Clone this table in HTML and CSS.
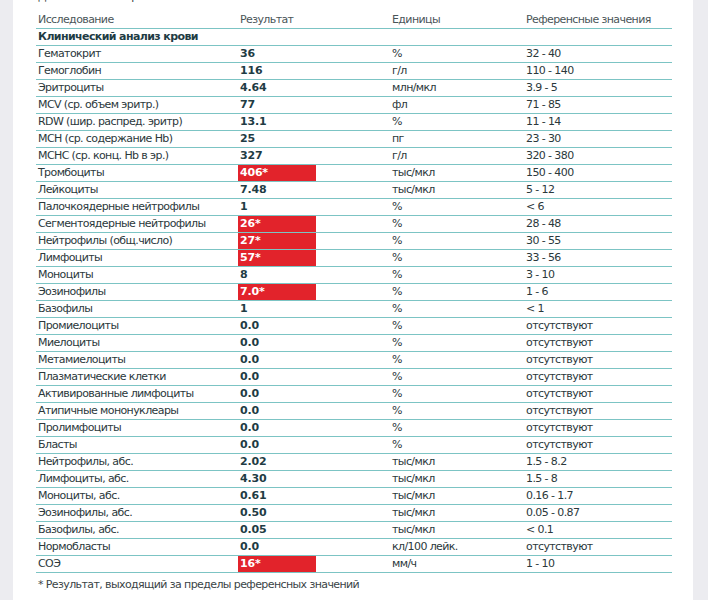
FILE: index.html
```html
<!DOCTYPE html>
<html lang="ru">
<head>
<meta charset="utf-8">
<link rel="stylesheet" href="styles.css">
</head>
<body>
<div class="frame">
  <div class="side side-left"></div>
  <main class="sheet">
    <div class="cut">Дата взятия материала: 12.03</div>
    <table class="results">
      <colgroup>
        <col class="c1"><col class="c2"><col class="c3"><col class="c4">
      </colgroup>
      <thead>
        <tr><th>Исследование</th><th>Результат</th><th>Единицы</th><th>Референсные значения</th></tr>
      </thead>
      <tbody>
        <tr class="section"><td colspan="4">Клинический анализ крови</td></tr>
        <tr><td>Гематокрит</td><td><span class="val">36</span></td><td>%</td><td>32 - 40</td></tr>
        <tr><td>Гемоглобин</td><td><span class="val">116</span></td><td>г/л</td><td>110 - 140</td></tr>
        <tr><td>Эритроциты</td><td><span class="val">4.64</span></td><td>млн/мкл</td><td>3.9 - 5</td></tr>
        <tr><td>MCV (ср. объем эритр.)</td><td><span class="val">77</span></td><td>фл</td><td>71 - 85</td></tr>
        <tr><td>RDW (шир. распред. эритр)</td><td><span class="val">13.1</span></td><td>%</td><td>11 - 14</td></tr>
        <tr><td>MCH (ср. содержание Hb)</td><td><span class="val">25</span></td><td>пг</td><td>23 - 30</td></tr>
        <tr><td>MCHC (ср. конц. Hb в эр.)</td><td><span class="val">327</span></td><td>г/л</td><td>320 - 380</td></tr>
        <tr><td>Тромбоциты</td><td><span class="val bad">406*</span></td><td>тыс/мкл</td><td>150 - 400</td></tr>
        <tr><td>Лейкоциты</td><td><span class="val">7.48</span></td><td>тыс/мкл</td><td>5 - 12</td></tr>
        <tr><td>Палочкоядерные нейтрофилы</td><td><span class="val">1</span></td><td>%</td><td>&lt; 6</td></tr>
        <tr><td>Сегментоядерные нейтрофилы</td><td><span class="val bad">26*</span></td><td>%</td><td>28 - 48</td></tr>
        <tr><td>Нейтрофилы (общ.число)</td><td><span class="val bad">27*</span></td><td>%</td><td>30 - 55</td></tr>
        <tr><td>Лимфоциты</td><td><span class="val bad">57*</span></td><td>%</td><td>33 - 56</td></tr>
        <tr><td>Моноциты</td><td><span class="val">8</span></td><td>%</td><td>3 - 10</td></tr>
        <tr><td>Эозинофилы</td><td><span class="val bad">7.0*</span></td><td>%</td><td>1 - 6</td></tr>
        <tr><td>Базофилы</td><td><span class="val">1</span></td><td>%</td><td>&lt; 1</td></tr>
        <tr><td>Промиелоциты</td><td><span class="val">0.0</span></td><td>%</td><td>отсутствуют</td></tr>
        <tr><td>Миелоциты</td><td><span class="val">0.0</span></td><td>%</td><td>отсутствуют</td></tr>
        <tr><td>Метамиелоциты</td><td><span class="val">0.0</span></td><td>%</td><td>отсутствуют</td></tr>
        <tr><td>Плазматические клетки</td><td><span class="val">0.0</span></td><td>%</td><td>отсутствуют</td></tr>
        <tr><td>Активированные лимфоциты</td><td><span class="val">0.0</span></td><td>%</td><td>отсутствуют</td></tr>
        <tr><td>Атипичные мононуклеары</td><td><span class="val">0.0</span></td><td>%</td><td>отсутствуют</td></tr>
        <tr><td>Пролимфоциты</td><td><span class="val">0.0</span></td><td>%</td><td>отсутствуют</td></tr>
        <tr><td>Бласты</td><td><span class="val">0.0</span></td><td>%</td><td>отсутствуют</td></tr>
        <tr><td>Нейтрофилы, абс.</td><td><span class="val">2.02</span></td><td>тыс/мкл</td><td>1.5 - 8.2</td></tr>
        <tr><td>Лимфоциты, абс.</td><td><span class="val">4.30</span></td><td>тыс/мкл</td><td>1.5 - 8</td></tr>
        <tr><td>Моноциты, абс.</td><td><span class="val">0.61</span></td><td>тыс/мкл</td><td>0.16 - 1.7</td></tr>
        <tr><td>Эозинофилы, абс.</td><td><span class="val">0.50</span></td><td>тыс/мкл</td><td>0.05 - 0.87</td></tr>
        <tr><td>Базофилы, абс.</td><td><span class="val">0.05</span></td><td>тыс/мкл</td><td>&lt; 0.1</td></tr>
        <tr><td>Нормобласты</td><td><span class="val">0.0</span></td><td>кл/100 лейк.</td><td>отсутствуют</td></tr>
        <tr><td>СОЭ</td><td><span class="val bad">16*</span></td><td>мм/ч</td><td>1 - 10</td></tr>
      </tbody>
    </table>
    <p class="note">* Результат, выходящий за пределы референсных значений</p>
  </main>
  <div class="side side-right"></div>
</div>
</body>
</html>
```
FILE: styles.css
```css
html, body {
  margin: 0;
  padding: 0;
  background: #ffffff;
}
body {
  font-family: "DejaVu Sans", Verdana, sans-serif;
  font-size: 11px;
  letter-spacing: -0.6px;
  color: #2b383b;
}
.frame {
  display: flex;
  height: 600px;
  overflow: hidden;
}
.side {
  background: #ececf0;
  flex: none;
}
.side-left { width: 13px; }
.side-right { width: 15px; }
.sheet {
  flex: 1;
  background: #ffffff;
  padding-left: 23px;
  overflow: hidden;
}
.cut {
  height: 17px;
  line-height: 17px;
  margin-top: -12px;
  margin-bottom: 7px;
  padding-left: 2px;
  color: #3a4446;
  white-space: nowrap;
}
.results {
  width: 636px;
  border-collapse: collapse;
  table-layout: fixed;
}
.c1 { width: 202px; }
.c2 { width: 152px; }
.c3 { width: 134px; }
.c4 { width: 148px; }
.results th,
.results td {
  height: 16px;
  padding: 0 0 0 2px;
  border-bottom: 1px solid #7cc4c4;
  text-align: left;
  vertical-align: middle;
  white-space: nowrap;
  line-height: 16px;
}
.results th {
  font-weight: normal;
  color: #4a5558;
}
.results td:nth-child(2) {
  padding-left: 0;
}
.section td {
  font-weight: bold;
  color: #1f3c44;
}
.val {
  display: block;
  width: 78px;
  padding-left: 2px;
  font-weight: bold;
  letter-spacing: -0.2px;
  color: #1f3c44;
  box-sizing: border-box;
}
.val.bad {
  background: #e2232b;
  color: #ffffff;
}
.note {
  margin: 5px 0 0;
  padding-left: 2px;
  color: #3a4446;
}
```
